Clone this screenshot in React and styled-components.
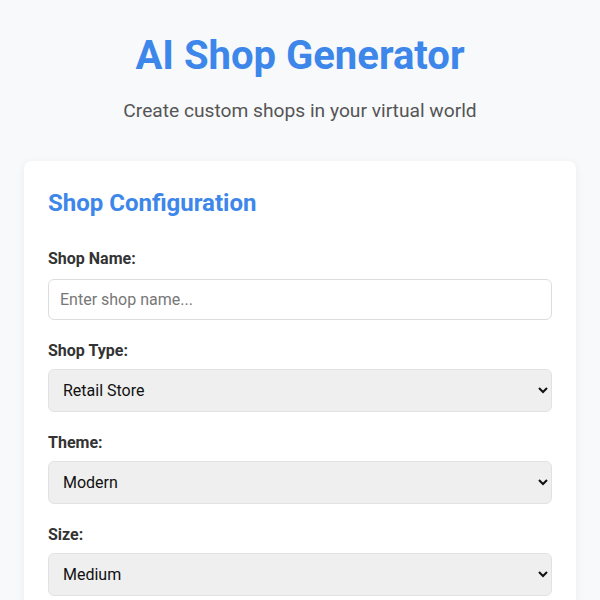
import React from "react";
import styled, { createGlobalStyle } from "styled-components";

const GlobalStyle = createGlobalStyle`
	body {
		margin: 0;
		background-color: #f8f9fb;
		font-family: Roboto, "Liberation Sans", sans-serif;
		color: #333;
	}
`;

const Page = styled.div`
	max-width: 600px;
	margin: 0 auto;
	padding: 24px;
	box-sizing: border-box;
`;

const Header = styled.header`
	text-align: center;
	margin-bottom: 39px;
`;

const Title = styled.h1`
	margin: 8px 0 0;
	font-size: 40px;
	font-weight: 700;
	color: #3d86ea;
`;

const Subtitle = styled.p`
	margin: 20px 0 0;
	font-size: 19.2px;
	color: #555;
`;

const Card = styled.section`
	background-color: #fff;
	border-radius: 8px;
	box-shadow: 0 2px 10px rgba(0, 0, 0, 0.06);
	padding: 24px;
`;

const CardTitle = styled.h2`
	margin: 4px 0 32px;
	font-size: 24px;
	font-weight: 700;
	color: #3d86ea;
`;

const Field = styled.div`
	display: flex;
	flex-direction: column;
	gap: ${(p) => (p.$tight ? "9px" : "11px")};
	margin-bottom: 21px;
`;

const Label = styled.label`
	font-size: 16px;
	font-weight: 700;
	color: #333;
`;

const TextInput = styled.input`
	font-family: inherit;
	font-size: 16px;
	padding: 10px 11px;
	border: 1px solid #ddd;
	border-radius: 6px;
	color: #333;
	background-color: #fff;

	&::placeholder {
		color: #777;
	}
`;

const Select = styled.select`
	font-family: inherit;
	font-size: 16px;
	padding: 10px;
	border: 1px solid #e2e2e2;
	border-radius: 6px;
	color: #111;
	background-color: #efefef;
`;

const fields = [
	{ label: "Shop Type:", options: ["Retail Store", "Restaurant", "Boutique"] },
	{ label: "Theme:", options: ["Modern", "Rustic", "Futuristic"] },
	{ label: "Size:", options: ["Medium", "Small", "Large"] },
];

function App() {
	return (
		<>
			<GlobalStyle />
			<Page>
				<Header>
					<Title>AI Shop Generator</Title>
					<Subtitle>Create custom shops in your virtual world</Subtitle>
				</Header>
				<Card>
					<CardTitle>Shop Configuration</CardTitle>
					<Field>
						<Label>Shop Name:</Label>
						<TextInput type="text" placeholder="Enter shop name..." />
					</Field>
					{fields.map((field) => (
						<Field key={field.label} $tight>
							<Label>{field.label}</Label>
							<Select defaultValue={field.options[0]}>
								{field.options.map((opt) => (
									<option key={opt}>{opt}</option>
								))}
							</Select>
						</Field>
					))}
				</Card>
			</Page>
		</>
	);
}

export default App;
